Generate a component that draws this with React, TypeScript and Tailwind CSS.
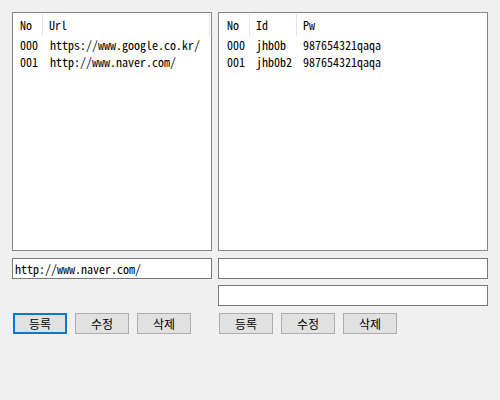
import React from "react";

const font = { fontFamily: '"Noto Sans Mono CJK KR", "Noto Sans CJK KR", "Liberation Sans", sans-serif' };

function Btn({ label, focused }: { label: string; focused?: boolean }) {
  return (
    <div
      className={
        "w-[54px] h-[21px] flex items-center justify-center text-[12px] text-black bg-[#e1e1e1] " +
        (focused ? "border-2 border-[#0078d7]" : "border border-[#adadad]")
      }
    >
      {label}
    </div>
  );
}

export default function App() {
  return (
    <div className="w-[500px] h-[400px] bg-[#f0f0f0] pt-[12px] pl-[12px] text-[12px] leading-[14px] text-black" style={font}>
      <div className="grid grid-cols-[200px_270px] gap-x-[6px]">
        {/* Left list */}
        <div className="h-[239px] bg-white border border-[#828790] flex flex-col">
          <div className="flex h-[24px] items-stretch">
            <div className="w-[30px] flex items-center pl-[7px] border-r border-[#e5e5e5] my-[1px]">No</div>
            <div className="flex-1 flex items-center pl-[6px] border-r border-[#e5e5e5] my-[1px] mr-[1px]">Url</div>
          </div>
          <div className="flex flex-col -mt-[1px]">
            <div className="flex h-[17px] items-center">
              <div className="w-[30px] pl-[7px]">000</div>
              <div className="pl-[7px]">https://www.google.co.kr/</div>
            </div>
            <div className="flex h-[17px] items-center">
              <div className="w-[30px] pl-[7px]">001</div>
              <div className="pl-[7px]">http://www.naver.com/</div>
            </div>
          </div>
        </div>
        {/* Right list */}
        <div className="h-[239px] bg-white border border-[#828790] flex flex-col">
          <div className="flex h-[24px] items-stretch">
            <div className="w-[31px] flex items-center pl-[8px] border-r border-[#e5e5e5] my-[1px]">No</div>
            <div className="w-[47px] flex items-center pl-[6px] border-r border-[#e5e5e5] my-[1px]">Id</div>
            <div className="flex-1 flex items-center pl-[6px]">Pw</div>
          </div>
          <div className="flex flex-col -mt-[1px]">
            <div className="flex h-[17px] items-center">
              <div className="w-[31px] pl-[8px]">000</div>
              <div className="w-[47px] pl-[6px]">jhb0b</div>
              <div className="pl-[6px]">987654321qaqa</div>
            </div>
            <div className="flex h-[17px] items-center">
              <div className="w-[31px] pl-[8px]">001</div>
              <div className="w-[47px] pl-[6px]">jhb0b2</div>
              <div className="pl-[6px]">987654321qaqa</div>
            </div>
          </div>
        </div>

        {/* Textbox row 1 */}
        <div className="mt-[7px] h-[21px] bg-white border border-[#7a7a7a] flex items-center pl-[2px]">http://www.naver.com/</div>
        <div className="mt-[7px] h-[21px] bg-white border border-[#7a7a7a]"></div>

        {/* Textbox row 2 */}
        <div className="mt-[6px] h-[21px]"></div>
        <div className="mt-[6px] h-[21px] bg-white border border-[#7a7a7a]"></div>

        {/* Buttons */}
        <div className="mt-[7px] ml-[1px] flex gap-[8px]">
          <Btn label="등록" focused />
          <Btn label="수정" />
          <Btn label="삭제" />
        </div>
        <div className="mt-[7px] ml-[1px] flex gap-[8px]">
          <Btn label="등록" />
          <Btn label="수정" />
          <Btn label="삭제" />
        </div>
      </div>
    </div>
  );
}
